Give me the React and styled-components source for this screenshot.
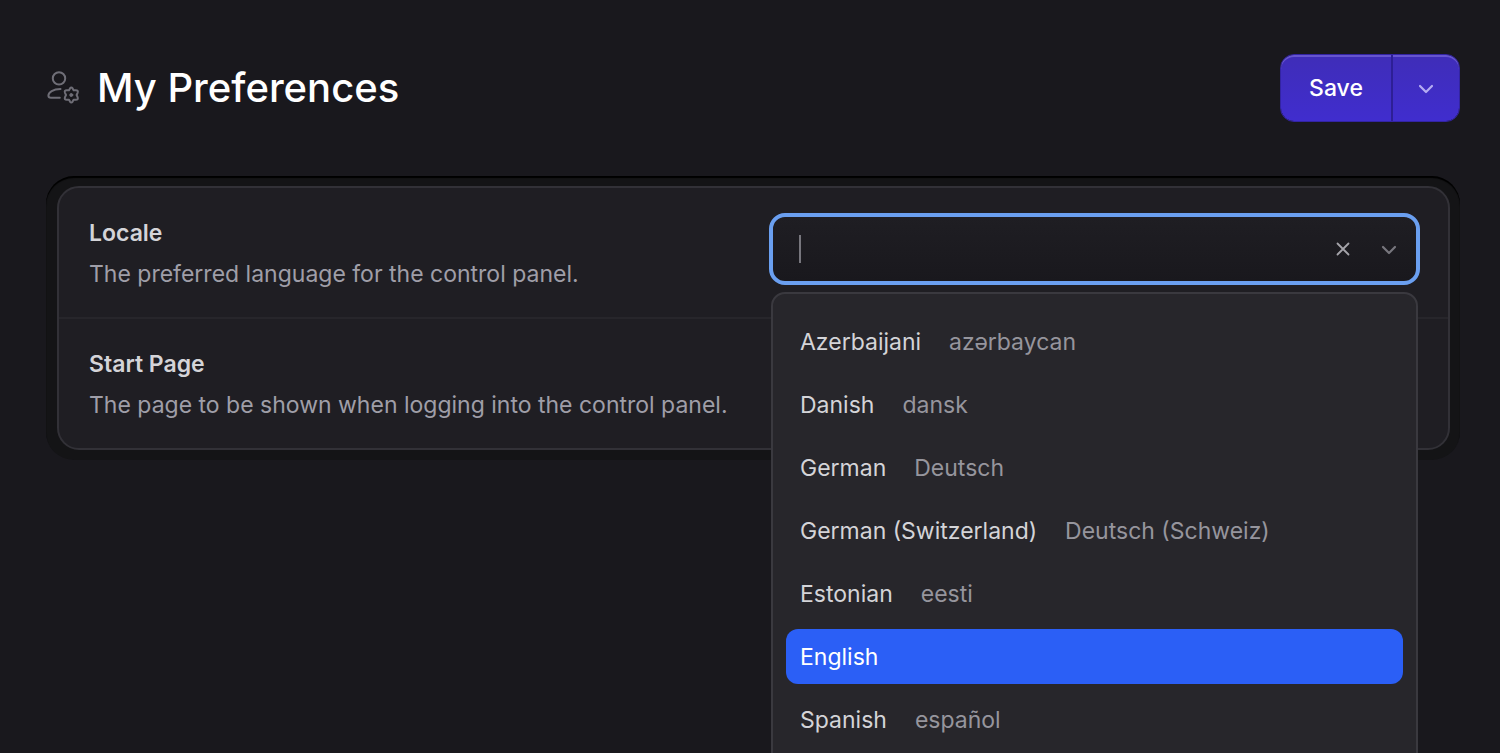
import React from "react";
import styled, { createGlobalStyle } from "styled-components";

const GlobalStyle = createGlobalStyle`
  *, *::before, *::after { box-sizing: border-box; }
  html, body { margin: 0; background: #19181d; }
  body {
    font-family: Inter, "Noto Sans", "Liberation Sans", sans-serif;
    font-size: 23px;
    line-height: 32px;
    color: #d4d4d8;
    -webkit-font-smoothing: antialiased;
  }
  button, input { font: inherit; color: inherit; border: 0; padding: 0; background: none; }
  button { cursor: pointer; }
`;

const Page = styled.main`
  height: 100vh;
  overflow: hidden;
  padding: 54px 40px 0 46px;
`;

const Header = styled.header`
  display: flex;
  align-items: center;
  justify-content: space-between;
  margin-bottom: 54px;
`;

const Heading = styled.div`
  display: flex;
  align-items: center;
  gap: 17px;
  color: #6f6e77;
`;

const Title = styled.h1`
  margin: 0;
  font-size: 40px;
  line-height: 50px;
  font-weight: 500;
  color: #ffffff;
`;

const SplitButton = styled.div`
  display: flex;
  height: 68px;
  border: 1px solid #3324a3;
  border-radius: 14px;
  overflow: hidden;
`;

const ActionButton = styled.button`
  display: flex;
  align-items: center;
  justify-content: center;
  width: ${(p) => (p.$icon ? "68px" : "110px")};
  border-left: ${(p) => (p.$icon ? "2px solid #2d1f96" : "0")};
  border-radius: ${(p) => (p.$icon ? "0 13px 13px 0" : "13px 0 0 13px")};
  background: linear-gradient(#3f2db8, #402dce);
  box-shadow: inset 0 2px 0 #6655cf;
  color: ${(p) => (p.$icon ? "#b5acf2" : "#ffffff")};
  font-weight: 500;
`;

const Frame = styled.section`
  padding: 10px 10px 10px 11px;
  border-radius: 28px;
  background: #141416;
  box-shadow: inset 0 2px 1px #000000;
`;

const Card = styled.div`
  border: 2px solid #323137;
  border-radius: 22px;
  background: #1f1e23;
`;

const Row = styled.div`
  display: grid;
  grid-template-columns: 1fr 1fr;
  column-gap: 35px;
  padding: 25px 30px 20px;
  height: 131px;

  &:first-child {
    height: 129px;
  }

  & + & {
    border-top: 2px solid #27262b;
  }
`;

const Text = styled.div`
  padding-top: 4px;
`;

const Label = styled.label`
  display: block;
  font-weight: 600;
  margin-bottom: 9px;
`;

const Description = styled.p`
  margin: 0;
  color: #9f9ea8;
`;

const Combo = styled.div`
  position: relative;
  height: 72px;
`;

const Field = styled.div`
  display: flex;
  align-items: center;
  height: 72px;
  margin: 0 -2px;
  padding: 0 19px 0 26px;
  border: 4px solid #6a9ff0;
  border-radius: 16px;
  background: linear-gradient(#1f1e23, #19181d);
  color: #9f9ea8;
`;

const Caret = styled.span`
  width: 2px;
  height: 28px;
  background: #77767d;
`;

const SearchInput = styled.input`
  flex: 1;
  min-width: 0;
  outline: none;
  caret-color: transparent;
`;

const IconButton = styled.button`
  display: flex;
  margin-left: 31px;
  color: ${(p) => (p.$dim ? "#77767d" : "#a5a4aa")};
`;

const Menu = styled.ul`
  position: absolute;
  z-index: 1;
  top: 79px;
  left: 0;
  right: 0;
  display: flex;
  flex-direction: column;
  gap: 8px;
  margin: 0;
  padding: 20px 13px;
  list-style: none;
  border: 2px solid #3a393f;
  border-radius: 14px;
  background: #27262b;
`;

const Option = styled.li`
  display: flex;
  align-items: center;
  gap: 28px;
  height: 55px;
  padding: 0 14px;
  border-radius: 12px;
  white-space: nowrap;
  background: ${(p) => (p.$active ? "#2b5ff6" : "transparent")};
  color: ${(p) => (p.$active ? "#ffffff" : "inherit")};
`;

const Native = styled.span`
  color: #96959d;
`;

const locales = [
  ["Azerbaijani", "azərbaycan"],
  ["Danish", "dansk"],
  ["German", "Deutsch"],
  ["German (Switzerland)", "Deutsch (Schweiz)"],
  ["Estonian", "eesti"],
  ["English", ""],
  ["Spanish", "español"],
];

const UserCog = () => (
  <svg width="34" height="34" viewBox="0 0 34 34" fill="none" stroke="currentColor" strokeWidth="2" strokeLinecap="round" strokeLinejoin="round" aria-hidden="true">
    <circle cx="13" cy="7.4" r="6.2" />
    <path d="M14.5 18C7 18 2.4 21.2 2.4 24.6C2.4 26 3.4 26.8 5 26.8H13.8" />
    <path d="M24 17.4Q25.3 15.6 26.6 17.4L27.6 19.2L29.8 19.2Q32.6 19.2 31.6 21.8L30.6 24L31.6 26.2Q32.6 28.8 29.8 28.8L27.6 28.8L26.6 30.6Q25.3 32.4 24 30.6L23 28.8L20.8 28.8Q18 28.8 19 26.2L20 24L19 21.8Q18 19.2 20.8 19.2L23 19.2Z" />
    <circle cx="25.3" cy="24" r="1.5" fill="currentColor" strokeWidth="1" />
  </svg>
);

const Chevron = () => (
  <svg width="16" height="16" viewBox="0 0 16 16" fill="none" stroke="currentColor" strokeWidth="2.2" strokeLinecap="round" strokeLinejoin="round" aria-hidden="true">
    <path d="M2 6L8 12L14 6" />
  </svg>
);

const Cross = () => (
  <svg width="14" height="14" viewBox="0 0 14 14" fill="none" stroke="currentColor" strokeWidth="1.8" strokeLinecap="round" aria-hidden="true">
    <path d="M1.5 1.5L12.5 12.5M12.5 1.5L1.5 12.5" />
  </svg>
);

export default function App() {
  return (
    <>
      <GlobalStyle />
      <Page>
        <Header>
          <Heading>
            <UserCog />
            <Title>My Preferences</Title>
          </Heading>
          <SplitButton>
            <ActionButton type="button">Save</ActionButton>
            <ActionButton type="button" $icon aria-label="Save options">
              <Chevron />
            </ActionButton>
          </SplitButton>
        </Header>
        <Frame>
          <Card>
            <Row>
              <Text>
                <Label htmlFor="locale">Locale</Label>
                <Description>The preferred language for the control panel.</Description>
              </Text>
              <Combo>
                <Field>
                  <Caret />
                  <SearchInput id="locale" role="combobox" aria-expanded="true" aria-controls="locales" autoComplete="off" />
                  <IconButton type="button" aria-label="Clear">
                    <Cross />
                  </IconButton>
                  <IconButton type="button" $dim aria-label="Toggle list">
                    <Chevron />
                  </IconButton>
                </Field>
                <Menu id="locales" role="listbox" aria-label="Locale">
                  {locales.map(([name, native]) => (
                    <Option key={name} role="option" aria-selected={name === "English"} $active={name === "English"}>
                      <span>{name}</span>
                      {native && <Native>{native}</Native>}
                    </Option>
                  ))}
                </Menu>
              </Combo>
            </Row>
            <Row>
              <Text>
                <Label as="div">Start Page</Label>
                <Description>The page to be shown when logging into the control panel.</Description>
              </Text>
            </Row>
          </Card>
        </Frame>
      </Page>
    </>
  );
}
